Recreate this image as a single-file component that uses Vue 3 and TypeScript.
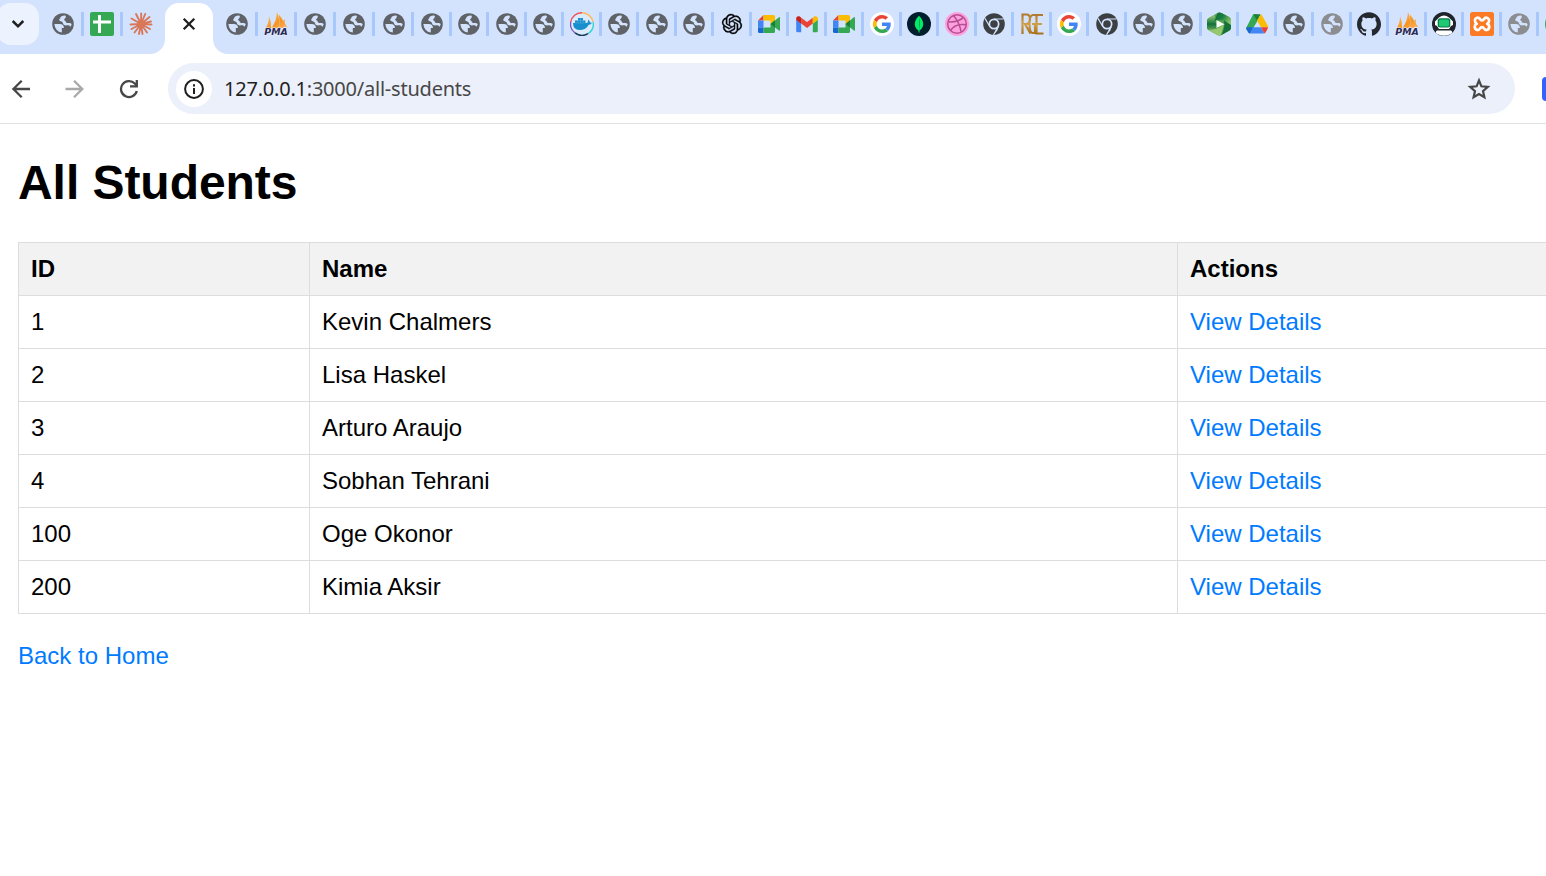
<script setup lang="ts">
interface Tab { icon: string; width: number }

const pinned: Tab[] = [
  { icon: 'globe', width: 39 },
  { icon: 'sheets', width: 39 },
  { icon: 'claude', width: 39 },
]

const icons = [
  'globe', 'pma', 'globe', 'globe', 'globe', 'globe', 'globe', 'globe', 'globe', 'docker',
  'globe', 'globe', 'globe', 'openai', 'meet', 'gmail', 'meet', 'google', 'mongo', 'dribbble',
  'chrome', 'rge', 'google', 'chrome', 'globe', 'globe', 'camtasia', 'drive', 'globe', 'globe-light',
  'github', 'pma', 'astro', 'xampp', 'globe-light', 'green',
]
const tabs: Tab[] = icons.map((icon, i) => ({
  icon,
  width: i < 5 ? 39 : i % 2 === 1 ? 38 : 37,
}))

const students = [
  { id: 1, name: 'Kevin Chalmers' },
  { id: 2, name: 'Lisa Haskel' },
  { id: 3, name: 'Arturo Araujo' },
  { id: 4, name: 'Sobhan Tehrani' },
  { id: 100, name: 'Oge Okonor' },
  { id: 200, name: 'Kimia Aksir' },
]
</script>

<template>
  <div class="window">
    <svg class="sprite" aria-hidden="true">
      <defs>
        <linearGradient id="sail" x1="0" y1="0" x2="1" y2="1">
          <stop offset="0" stop-color="#fbc56d" /><stop offset=".6" stop-color="#f79421" /><stop offset="1" stop-color="#fcb566" />
        </linearGradient>
        <linearGradient id="gold" x1="0" y1="0" x2="0" y2="1">
          <stop offset="0" stop-color="#b07a2c" /><stop offset=".5" stop-color="#d0a04c" /><stop offset="1" stop-color="#a87018" />
        </linearGradient>
        <linearGradient id="leafdark" x1="0" y1="0" x2="1" y2=".6">
          <stop offset="0" stop-color="#0b6b38" /><stop offset=".5" stop-color="#1c7f42" /><stop offset="1" stop-color="#8fc76e" />
        </linearGradient>
        <linearGradient id="leaflight" x1="0" y1="0" x2="0" y2="1">
          <stop offset="0" stop-color="#9fcf78" /><stop offset=".45" stop-color="#12713b" /><stop offset="1" stop-color="#9fcb70" />
        </linearGradient>
      </defs>
      <symbol id="globe" viewBox="0 0 24 24">
        <circle cx="12" cy="12" r="10.8" fill="currentColor" />
        <path fill="#d3e3fd" d="M3.400 12.100H8.600C11.600 12.100 13 13.600 12.900 16.100H10.800V20.500A8.700 8.700 0 0 1 3.400 12.100ZM14.600 3.700C12 3.200 9.300 4.700 9 6.500L8.100 7.600C8.400 9.200 9.500 9.400 10.800 9.700 12.300 10.100 11.600 12.200 13.200 13 15 13.900 16.700 12.800 18.200 13.600L19.600 14.700 20.700 12.200C19 10.300 17.600 11.500 15.900 10.900 14.400 10.300 14.900 9 13.400 8.300 11.900 7.500 15.900 6 14.600 3.700Z" />
      </symbol>
      <symbol id="sheets" viewBox="0 0 24 24">
        <rect width="24" height="24" rx="2" fill="#34a853" />
        <path fill="#fff" d="M8 3h3v5.500h10v3H11V21H8v-9.500H3v-3h5z" />
      </symbol>
      <symbol id="claude" viewBox="0 0 24 24">
        <g stroke="#d97757" stroke-width="1.900" stroke-linecap="round">
          <path d="M12 12 7 2M12 12 12.200 1.500M12 12 16.200 2M12 12 20.500 5M12 12 22 9.500M12 12 22.500 12.500M12 12 21 17M12 12 18 20.500M12 12 13.500 22M12 12 10 22M12 12 5.500 20.500M12 12 2.500 17M12 12 1.500 12.500M12 12 2.500 6.500" />
        </g>
        <circle cx="12" cy="12" r="3.400" fill="#d97757" />
      </symbol>
      <symbol id="pma" viewBox="0 0 24 24">
        <path fill="url(#sail)" d="M1.500 16Q5 12 5 4Q7.500 10 7 16ZM7.500 16Q12.500 9 13 0Q16.500 8 14.500 16ZM15 16Q16 10 14.800 2.500Q20 8 19 12Q18.500 8 21 7.500Q19.500 11.500 24 15.500L20 14.500 19 16Z" />
        <text x=".3" y="23" textLength="23.500" lengthAdjust="spacingAndGlyphs" font-family="DejaVu Sans, sans-serif" font-size="9.300" font-weight="bold" font-style="italic" fill="#292b59" stroke="#eef0fa" stroke-width="1.200" paint-order="stroke">PMA</text>
      </symbol>
      <symbol id="docker" viewBox="0 0 24 24">
        <circle cx="12" cy="12" r="11.300" fill="#dceafd" />
        <g fill="none" stroke-width="1.400">
          <path stroke="#f04a50" d="M.700 10A11.300 11.300 0 0 1 12 .7" />
          <path stroke="#ffb85a" d="M12 .7A11.300 11.300 0 0 1 23 10" />
          <path stroke="#35d5d5" d="M23.100 10A11.300 11.300 0 0 1 18 21.600" />
          <path stroke="#123c54" d="M18 21.600A11.300 11.300 0 0 1 5 20.900" />
          <path stroke="#8154c0" d="M5 20.900A11.300 11.300 0 0 1 .7 10" />
        </g>
        <path fill="#168fcc" d="M3 11H5V8.500H8V6H13V8.500H15.500V11H17Q18.500 10 18 7.800Q20 8.700 20 10.400L22 10.700Q21 12.800 18.700 12.700Q16 18 9.500 18Q3 18 3 11Z" />
        <path stroke="#8dc8e7" stroke-width=".300" d="M5 11h10.500M8 8.500h5M8 8.500V11M10.500 6v5M13 8.500V11" />
      </symbol>
      <symbol id="openai" viewBox="-2.400 -2.400 28.800 28.800">
        <path fill="#000" stroke="#000" stroke-width=".400" d="M22.2819 9.8211a5.9847 5.9847 0 0 0-.5157-4.9108 6.0462 6.0462 0 0 0-6.5098-2.9A6.0651 6.0651 0 0 0 4.9807 4.1818a5.9847 5.9847 0 0 0-3.9977 2.9 6.0462 6.0462 0 0 0 .7427 7.0966 5.98 5.98 0 0 0 .511 4.9107 6.051 6.051 0 0 0 6.5146 2.9001A5.9847 5.9847 0 0 0 13.2599 24a6.0557 6.0557 0 0 0 5.7718-4.2058 5.9894 5.9894 0 0 0 3.9977-2.9001 6.0557 6.0557 0 0 0-.7475-7.0729zm-9.022 12.6081a4.4755 4.4755 0 0 1-2.8764-1.0408l.1419-.0804 4.7783-2.7582a.7948.7948 0 0 0 .3927-.6813v-6.7369l2.02 1.1686a.071.071 0 0 1 .038.052v5.5826a4.504 4.504 0 0 1-4.4945 4.4944zm-9.6607-4.1254a4.4708 4.4708 0 0 1-.5346-3.0137l.142.0852 4.783 2.7582a.7712.7712 0 0 0 .7806 0l5.8428-3.3685v2.3324a.0804.0804 0 0 1-.0332.0615L9.74 19.9502a4.4992 4.4992 0 0 1-6.1408-1.6464zM2.3408 7.8956a4.485 4.485 0 0 1 2.3655-1.9728V11.6a.7664.7664 0 0 0 .3879.6765l5.8144 3.3543-2.0201 1.1685a.0757.0757 0 0 1-.071 0l-4.8303-2.7865A4.504 4.504 0 0 1 2.3408 7.872zm16.5963 3.8558L13.1038 8.364 15.1192 7.2a.0757.0757 0 0 1 .071 0l4.8303 2.7913a4.4944 4.4944 0 0 1-.6765 8.1042v-5.6772a.79.79 0 0 0-.407-.667zm2.0107-3.0231l-.142-.0852-4.7735-2.7818a.7759.7759 0 0 0-.7854 0L9.409 9.2297V6.8974a.0662.0662 0 0 1 .0284-.0615l4.8303-2.7866a4.4992 4.4992 0 0 1 6.6802 4.66zM8.3065 12.863l-2.02-1.1638a.0804.0804 0 0 1-.038-.0567V6.0742a4.4992 4.4992 0 0 1 7.3757-3.4537l-.142.0805L8.704 5.459a.7948.7948 0 0 0-.3927.6813zm1.0976-2.3654l2.602-1.4998 2.6069 1.4998v2.9994l-2.5974 1.4997-2.6067-1.4997Z" />
      </symbol>
      <symbol id="meet" viewBox="0 0 24 24">
        <path fill="#ea4335" d="M1 8.500 6.500 3v5.500z" />
        <path fill="#fbbc04" d="M6.500 3H16.500Q18 3 18 4.500V9L13.500 12V8.500h-7z" />
        <path fill="#4285f4" d="M1 8.500h5.500v7H1z" />
        <path fill="#1967d2" d="M1 15.500h5.500V21H2.500Q1 21 1 19.500z" />
        <path fill="#34a853" d="M6.500 15.500h7V12L22 5.200Q23 4.700 23 5.800V18.200Q23 19.300 22 18.600L18 15.500v4Q18 21 16.500 21h-10z" />
        <path fill="#188038" d="M13.500 12 18 8.300v7.200z" />
      </symbol>
      <symbol id="gmail" viewBox="0 0 24 24">
        <path fill="#4285f4" d="M1.200 7.500 6.200 11.500v8.700H2.700Q1.200 20.200 1.200 18.700z" />
        <path fill="#34a853" d="M17.800 11.500 22.800 7.500v11.200Q22.800 20.200 21.300 20.200h-3.500z" />
        <path fill="#ea4335" d="M6.200 5.700 12 10.100l5.800-4.400v5.900L12 16l-5.800-4.400z" />
        <path fill="#c5221f" d="M1.200 6V8l5 3.700V5.700L4.800 4.600C3.300 3.500 1.200 4.500 1.200 6z" />
        <path fill="#fbbc04" d="M22.800 6V8l-5 3.700V5.700l1.400-1.100C20.700 3.500 22.800 4.500 22.800 6z" />
      </symbol>
      <symbol id="google" viewBox="0 0 24 24">
        <circle cx="12" cy="12" r="12" fill="#fff" />
        <g transform="translate(2.900 2.900) scale(.379)">
          <path fill="#ea4335" d="M24 9.500c3.540 0 6.710 1.220 9.210 3.600l6.850-6.850C35.900 2.380 30.470 0 24 0 14.620 0 6.510 5.380 2.560 13.220l7.980 6.190C12.430 13.720 17.740 9.500 24 9.500z" />
          <path fill="#4285f4" d="M46.980 24.550c0-1.570-.150-3.090-.380-4.550H24v9.020h12.940c-.580 2.960-2.260 5.480-4.780 7.180l7.730 6c4.510-4.180 7.090-10.360 7.090-17.650z" />
          <path fill="#fbbc05" d="M10.530 28.590A14.500 14.500 0 0 1 9.770 24c0-1.600.270-3.140.760-4.590l-7.980-6.190A24 24 0 0 0 0 24c0 3.880.920 7.540 2.560 10.780z" />
          <path fill="#34a853" d="M24 48c6.480 0 11.930-2.130 15.890-5.810l-7.730-6C30 37.640 27.240 38.490 24 38.490c-6.260 0-11.570-4.220-13.470-9.910l-7.980 6.190C6.510 42.620 14.620 48 24 48z" />
        </g>
      </symbol>
      <symbol id="mongo" viewBox="0 0 24 24">
        <circle cx="12" cy="12" r="12" fill="#001e2b" />
        <path fill="#00ed64" d="M12 3.800Q16.300 8 16.200 12.300 16.100 16 12.500 18.600V20.500H11.500V18.600Q7.900 16 7.800 12.300 7.700 8 12 3.800Z" />
        <path fill="#00a35c" d="M12 6v12.600Q13.300 14 13 10 12.800 7 12 6z" />
      </symbol>
      <symbol id="dribbble" viewBox="0 0 24 24">
        <circle cx="12" cy="12" r="12" fill="#ff9fdd" />
        <g fill="none" stroke="#b35094" stroke-width="1.500">
          <circle cx="12" cy="12" r="9.300" />
          <path d="M8.500 3.500Q14.500 10.500 16.200 20.200M3 9.800Q13.500 10.500 18.500 5.400M5.400 18.500Q10.500 10.800 21.200 12.800" />
        </g>
      </symbol>
      <symbol id="chrome" viewBox="0 0 24 24">
        <circle cx="12" cy="12" r="10.800" fill="#3c4043" />
        <circle cx="12" cy="12" r="5.500" fill="#d3e3fd" />
        <circle cx="12" cy="12" r="3.800" fill="#3c4043" />
        <path fill="none" stroke="#d3e3fd" stroke-width="1.100" d="M12 7H21.500M7.700 14.500 3 6.400M16.300 14.500 11.500 22.800" />
        <path fill="#d3e3fd" d="M11.500 23 14.300 17 16.800 14.200 15.300 18.500Z" />
      </symbol>
      <symbol id="rge" viewBox="0 0 24 24">
        <path fill="none" stroke="url(#gold)" stroke-width="2.200" d="M2.500 22V2.500H6.500Q10 2.500 10 7T6.500 12H5L10.500 21.500M18 3H13Q9.500 3 9.500 12T13 21H15V12H12M23 3H16.500V21.500H23.500M16.500 12H22" />
      </symbol>
      <symbol id="camtasia" viewBox="0 0 24 24">
        <path fill="#4f9f50" d="M10.500 1Q12.500 0 14.500 1L22.500 5.300Q24 6.200 24 8V16Q24 17.500 22.500 18.400L14.500 23Q12.500 24 10.500 23L1.500 18Q0 17 0 15.500V8.500Q0 7 1.300 6.300Z" />
        <path fill="url(#leaflight)" d="M7.500 3 9 12 12.500 16 10 23 1.500 18Q0 17 0 15.500V8.500Q0 7 1.300 6.300Z" />
        <path fill="url(#leafdark)" d="M10.500 1Q12.500 0 14.500 1L22.500 5.300Q24 6.200 24 8V15L15.500 7.500 7.500 9Z" />
        <path fill="#96c86d" d="M1.500 17.800Q10 18 17 12.500L14 23.300Q12.500 24 10.500 23Z" />
        <path fill="#157039" d="M17 8.500 24 13V16Q24 17.500 22.500 18.400L14 23.300Q18.500 17 17 8.500Z" />
        <path fill="#f5fff2" d="M9.500 8 17.500 12.300 9.500 16Z" />
      </symbol>
      <symbol id="drive" viewBox="0 0 24 24">
        <path fill="#34a853" d="M8.300 2.200H12L14.200 6 4.900 21.500Q3.800 21.300 3.200 20.300L1.500 17.200Q1 16.200 1.500 15.200L7.500 3.600Z" />
        <path fill="#188038" d="M8.300 2.200H15.700L12 8.500Z" />
        <path fill="#fbbc04" d="M15.700 2.200Q16.500 2.600 17 3.400L22.500 13.300Q23 14.300 23 15.300H16L12 8.500Z" />
        <path fill="#4285f4" d="M8 15.300H16L19.300 21.500H4.700Z" />
        <path fill="#ea4335" d="M16 15.300H22.900Q23 16.200 22.500 17L20.700 20.300Q20.100 21.300 19.300 21.500Z" />
        <path fill="#1967d2" d="M1.200 15.300H8L4.700 21.500Q3.800 21.300 3.200 20.300L1.500 17.200Z" />
      </symbol>
      <symbol id="github" viewBox="0 0 24 24">
        <path fill="#24292f" d="M12 .297c-6.63 0-12 5.373-12 12 0 5.303 3.438 9.8 8.205 11.385.6.113.82-.258.82-.577 0-.285-.01-1.04-.015-2.04-3.338.724-4.042-1.61-4.042-1.61C4.422 18.07 3.633 17.7 3.633 17.7c-1.087-.744.084-.729.084-.729 1.205.084 1.838 1.236 1.838 1.236 1.07 1.835 2.809 1.305 3.495.998.108-.776.417-1.305.76-1.605-2.665-.3-5.466-1.332-5.466-5.93 0-1.31.465-2.38 1.235-3.22-.135-.303-.54-1.523.105-3.176 0 0 1.005-.322 3.3 1.23.96-.267 1.98-.399 3-.405 1.02.006 2.04.138 3 .405 2.28-1.552 3.285-1.23 3.285-1.23.645 1.653.24 2.873.12 3.176.765.84 1.23 1.91 1.23 3.22 0 4.61-2.805 5.625-5.475 5.92.42.36.81 1.096.81 2.22 0 1.606-.015 2.896-.015 3.286 0 .315.21.69.825.57C20.565 22.092 24 17.592 24 12.297c0-6.627-5.373-12-12-12" />
      </symbol>
      <symbol id="astro" viewBox="0 0 24 24">
        <circle cx="12" cy="12" r="12" fill="#20232a" />
        <path fill="#fff" d="M7 5.500Q12 1.500 17 5.500L19.500 8 21 9.500V13L19 14 17 17H7L5 14 3 13V9.500L4.500 8Z" />
        <path fill="#fff" d="M5 18.500H19Q21 20 19.500 21.500Q12 26 4.500 21.500Q3 20 5 18.500Z" />
        <rect x="5.700" y="6.300" width="12.600" height="9.200" rx="2.500" fill="#087a4b" />
        <rect x="7" y="7.500" width="10" height="7" rx="1.500" fill="#1fc873" />
      </symbol>
      <symbol id="xampp" viewBox="0 0 24 24">
        <rect width="24" height="24" rx="2.500" fill="#fb7a24" />
        <path fill="none" stroke="#fff" stroke-width="2.700" stroke-linejoin="round" d="M7.300 5.700C10.300 5 9.500 8.500 12 8.500s1.700-3.500 4.700-2.800c3 .8 3.200 4.300.5 6.100 2.900 1.400 2.700 5.400-.5 6.200-3 .5-2.200-2.800-4.700-2.800S10.300 18.500 7.300 18c-3.200-.8-3.400-4.800-.5-6.200C4.100 10 4.300 6.500 7.300 5.700Z" />
      </symbol>
      <symbol id="green" viewBox="0 0 24 24">
        <circle cx="12" cy="12" r="12" fill="#3f9d58" />
      </symbol>
    </svg>

    <nav class="tabstrip">
      <button class="tabsearch" aria-label="Search tabs">
        <svg width="14" height="10" viewBox="0 0 14 10"><path d="M1.700 2 7 7.300 12.300 2" fill="none" stroke="#1f1f1f" stroke-width="2.500" /></svg>
      </button>
      <div v-for="(t, i) in pinned" :key="'p' + i" class="tab" :class="{ last: i === 2 }" :style="{ width: t.width + 'px' }">
        <svg class="icon"><use :href="'#' + t.icon" /></svg>
      </div>
      <div class="tab-active">
        <svg width="14" height="14" viewBox="0 0 14 14"><path d="M1.700 1.700 12.300 12.300M12.300 1.700 1.700 12.300" stroke="#1f1f1f" stroke-width="2.300" /></svg>
      </div>
      <div v-for="(t, i) in tabs" :key="i" class="tab" :style="{ width: t.width + 'px' }">
        <svg class="icon" :class="{ faded: t.icon === 'globe-light' }"><use :href="'#' + t.icon.replace('-light', '')" /></svg>
      </div>
    </nav>

    <header class="toolbar">
      <div class="nav">
        <svg width="20" height="20" viewBox="0 0 20 20"><path d="M19 10H3M10.700 1.700 2.400 10 10.700 18.300" fill="none" stroke="#474747" stroke-width="2.300" /></svg>
        <svg width="20" height="20" viewBox="0 0 20 20"><path d="M.500 10H17M9 1.700 17.300 10 9 18.300" fill="none" stroke="#a9a9a9" stroke-width="2.300" /></svg>
        <svg width="20" height="20" viewBox="0 0 20 20"><path d="M17.800 12A8 8 0 1 1 15.800 4.500L18 7" fill="none" stroke="#474747" stroke-width="2.300" /><path d="M17.800 1V7.400H11" fill="none" stroke="#474747" stroke-width="2.300" /></svg>
      </div>
      <div class="omnibox">
        <span class="info">
          <svg width="20" height="20" viewBox="0 0 20 20"><circle cx="10" cy="10" r="8.900" fill="none" stroke="#1f1f1f" stroke-width="2" /><path d="M10 9v6M10 5.200v2.200" stroke="#1f1f1f" stroke-width="2" /></svg>
        </span>
        <span class="url"><span class="host">127.0.0.1</span>:3000/all-students</span>
        <svg class="star" width="24" height="24" viewBox="0 0 24 24"><path d="M12 3.500 14.400 9.300 20.800 9.900 16 14.100 17.400 20.300 12 17 6.600 20.300 8 14.100 3.200 9.900 9.600 9.300Z" fill="none" stroke="#474747" stroke-width="2.200" /></svg>
      </div>
      <div class="extension"></div>
    </header>

    <main class="page">
      <h1>All Students</h1>
      <table>
        <colgroup><col class="c-id" /><col class="c-name" /><col /></colgroup>
        <thead><tr><th>ID</th><th>Name</th><th>Actions</th></tr></thead>
        <tbody>
          <tr v-for="s in students" :key="s.id">
            <td>{{ s.id }}</td>
            <td>{{ s.name }}</td>
            <td><a>View Details</a></td>
          </tr>
        </tbody>
      </table>
      <a class="back">Back to Home</a>
    </main>
  </div>
</template>

<style>
html, body { margin: 0; background: #fff; overflow: hidden; }
</style>

<style scoped>
.window { width: 1546px; height: 876px; overflow: hidden; background: #fff; font-family: "Liberation Sans", Arial, sans-serif; color: #000; position: relative; }
.sprite { position: absolute; width: 0; height: 0; }
.tabstrip { display: flex; height: 54px; background: #d3e3fd; overflow: hidden; }
.tabsearch { flex: none; box-sizing: border-box; width: 42px; height: 42px; margin: 3px 6px 0 -3px; padding: 0; border: 0; border-radius: 14px; background: #ecf2fe; display: flex; align-items: center; justify-content: center; }
.tab { flex: none; box-sizing: border-box; height: 24px; margin-top: 12px; border-right: 3px solid #a8c7fa; display: flex; justify-content: flex-end; padding-right: 5px; }
.tab:nth-child(-n+9) { padding-right: 6px; }
.tab.last { border-right-color: transparent; }
.icon { width: 24px; height: 24px; flex: none; color: #5f6368; }
.icon.faded { color: #8b8d90; }
.tab-active { flex: none; position: relative; width: 48px; height: 51px; margin: 3px 6px 0 3px; background: #fff; border-radius: 14px 14px 0 0; display: flex; justify-content: center; box-sizing: border-box; padding-top: 14px; }
.tab-active::before, .tab-active::after { content: ""; position: absolute; bottom: 0; width: 15px; height: 15px; }
.tab-active::before { right: 100%; background: radial-gradient(circle at 0 0, transparent 14.500px, #fff 15.500px); }
.tab-active::after { left: 100%; background: radial-gradient(circle at 100% 0, transparent 14.500px, #fff 15.500px); }
.toolbar { box-sizing: border-box; height: 70px; border-bottom: 1px solid #dfe1e2; display: flex; align-items: center; width: 1580px; }
.nav { display: flex; gap: 34px; padding-left: 11px; width: 157px; flex: none; }
.omnibox { flex: none; width: 1347px; height: 51px; box-sizing: border-box; border-radius: 26px; background: #ecf0fa; display: flex; align-items: center; padding: 0 24px 0 8px; }
.info { width: 36px; height: 36px; border-radius: 50%; background: #fff; display: flex; align-items: center; justify-content: center; }
.url { margin-left: 12px; font-family: "Noto Sans", "Open Sans", sans-serif; font-size: 20px; letter-spacing: -.220px; color: #474747; white-space: pre; }
.host { color: #1f1f1f; }
.star { margin-left: auto; }
.extension { width: 30px; height: 24px; margin-left: 27px; background: #3363ff; border-radius: 4px; }
.page { padding: 0 0 0 18px; width: 1600px; box-sizing: border-box; }
h1 { margin: 31px 0 31px; font-size: 48px; line-height: 56px; font-weight: 700; letter-spacing: -.050px; }
table { width: 1582px; table-layout: fixed; border-collapse: collapse; font-size: 24px; line-height: 28px; }
.c-id { width: 291px; }
.c-name { width: 868px; }
th, td { box-sizing: border-box; height: 53px; padding: 0 12px; border: 1px solid #ddd; text-align: left; }
th { background: #f2f2f2; }
a { color: #007bff; }
.back { display: inline-block; margin-top: 28px; font-size: 24px; line-height: 28px; }
</style>
